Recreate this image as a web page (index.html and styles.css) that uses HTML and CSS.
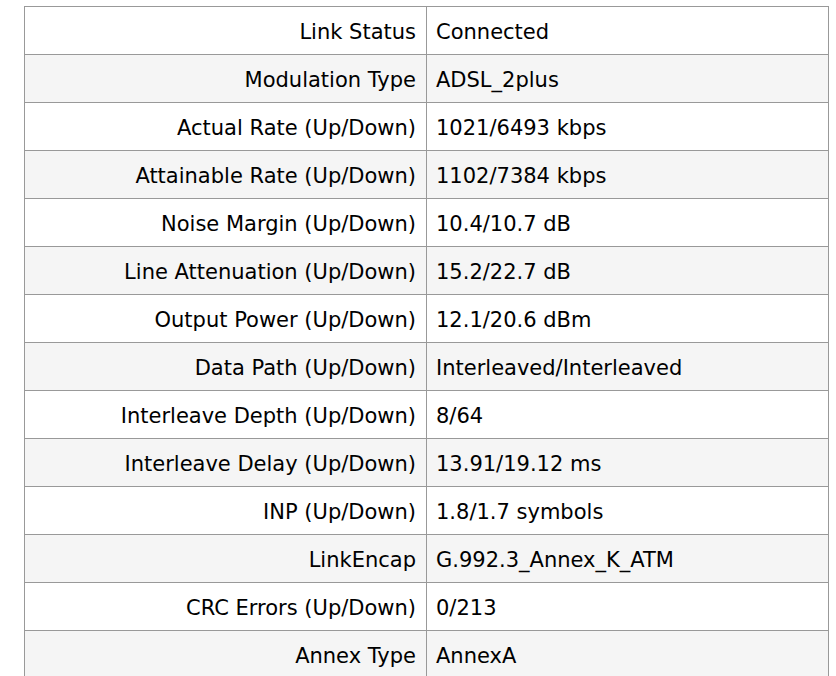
FILE: index.html
```html
<!DOCTYPE html>
<html>
<head>
<meta charset="utf-8">
<link rel="stylesheet" href="styles.css">
</head>
<body>
<table class="status">
<tr><td class="label">Link Status</td><td class="value">Connected</td></tr>
<tr><td class="label">Modulation Type</td><td class="value">ADSL_2plus</td></tr>
<tr><td class="label">Actual Rate (Up/Down)</td><td class="value">1021/6493 kbps</td></tr>
<tr><td class="label">Attainable Rate (Up/Down)</td><td class="value">1102/7384 kbps</td></tr>
<tr><td class="label">Noise Margin (Up/Down)</td><td class="value">10.4/10.7 dB</td></tr>
<tr><td class="label">Line Attenuation (Up/Down)</td><td class="value">15.2/22.7 dB</td></tr>
<tr><td class="label">Output Power (Up/Down)</td><td class="value">12.1/20.6 dBm</td></tr>
<tr><td class="label">Data Path (Up/Down)</td><td class="value">Interleaved/Interleaved</td></tr>
<tr><td class="label">Interleave Depth (Up/Down)</td><td class="value">8/64</td></tr>
<tr><td class="label">Interleave Delay (Up/Down)</td><td class="value">13.91/19.12 ms</td></tr>
<tr><td class="label">INP (Up/Down)</td><td class="value">1.8/1.7 symbols</td></tr>
<tr><td class="label">LinkEncap</td><td class="value">G.992.3_Annex_K_ATM</td></tr>
<tr><td class="label">CRC Errors (Up/Down)</td><td class="value">0/213</td></tr>
<tr><td class="label">Annex Type</td><td class="value">AnnexA</td></tr>
</table>
</body>
</html>
```
FILE: styles.css
```css
html, body {
  margin: 0;
  padding: 0;
  background: #ffffff;
}
body {
  padding: 6px 0 0 24px;
  font-family: "DejaVu Sans", Verdana, sans-serif;
  font-size: 21px;
  color: #000;
}
.status {
  border-collapse: collapse;
  width: 805px;
  table-layout: fixed;
}
.status tr {
  height: 48px;
}
.status tr:nth-child(even) {
  background: #f5f5f5;
}
.status td {
  border: 1px solid #999999;
  padding: 2px 10px 0 9px;
  vertical-align: middle;
  white-space: nowrap;
}
.status .label {
  width: 382px;
  text-align: right;
}
.status .value {
  text-align: left;
}
```
